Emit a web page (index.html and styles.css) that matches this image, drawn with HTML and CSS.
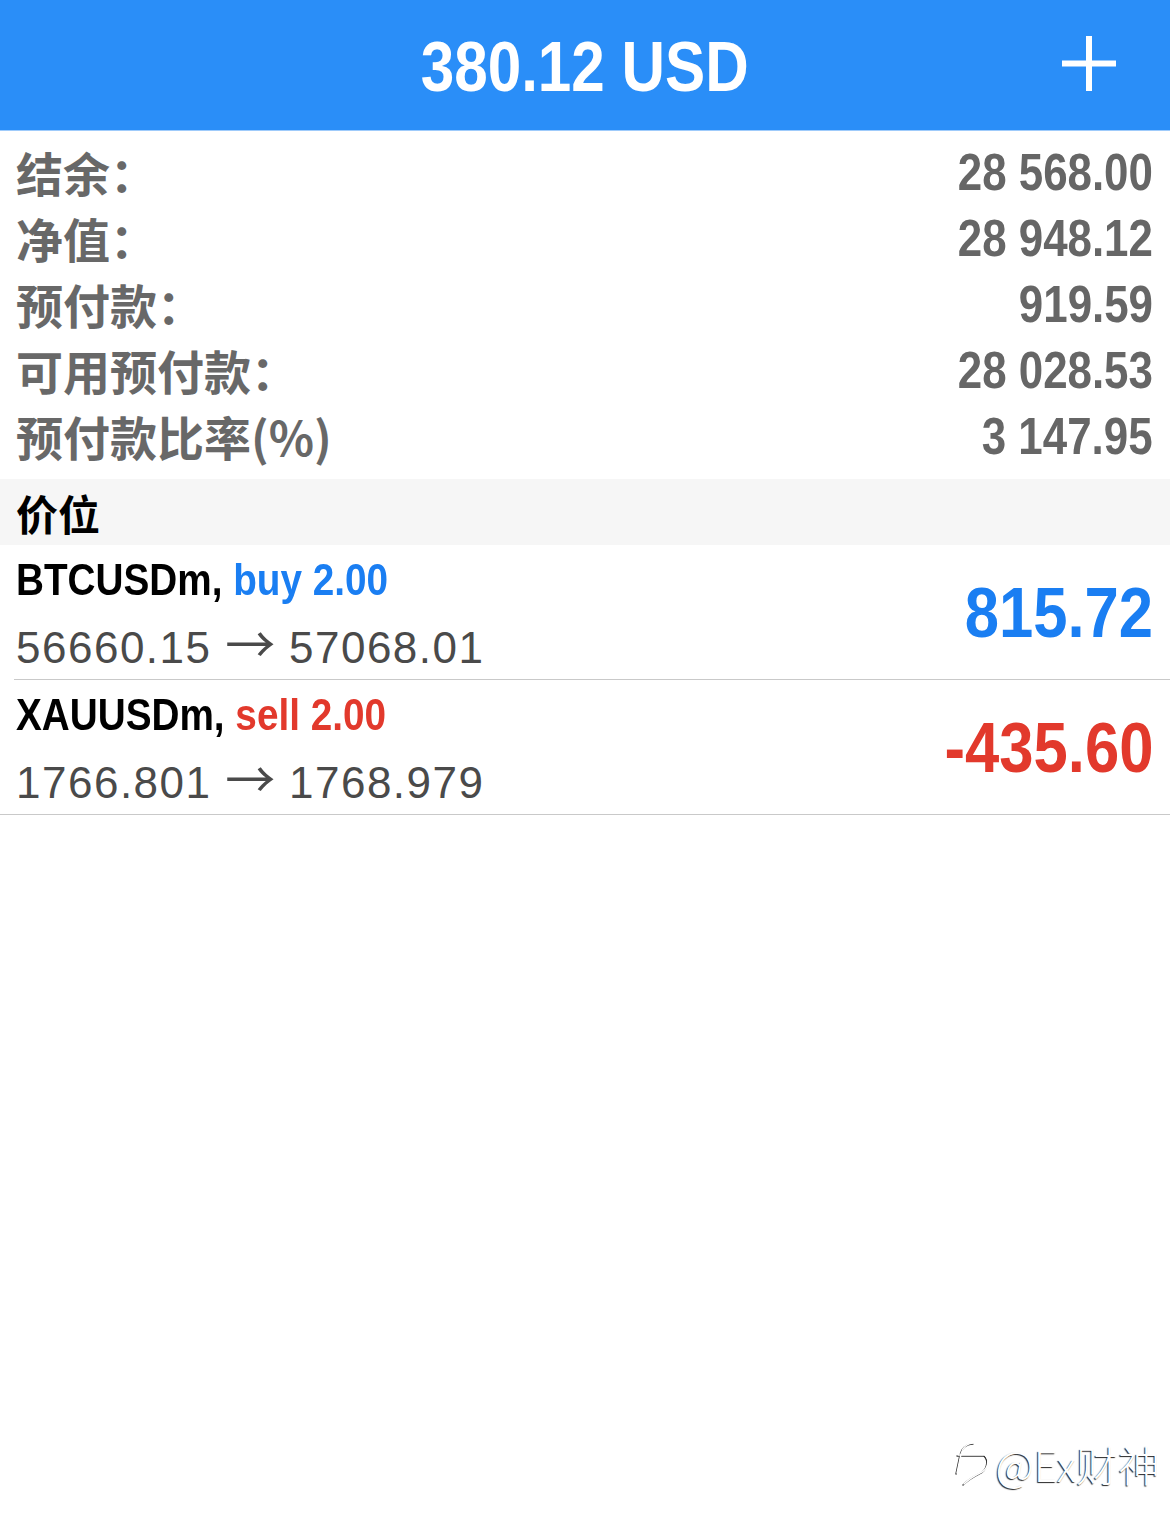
FILE: index.html
```html
<!DOCTYPE html>
<html lang="zh-CN">
<head>
<meta charset="utf-8">
<title>MT4 交易</title>
<link rel="stylesheet" href="styles.css">
</head>
<body>
<div class="screen">
  <header class="topbar">
    <div class="spacer"></div>
    <div class="title"><span class="cond c-center">380.12 USD</span></div>
    <div class="actions">
      <svg class="plus" viewBox="0 0 54 55" width="54" height="55" aria-hidden="true">
        <rect x="24" y="0" width="6" height="55" fill="#fff"/>
        <rect x="0" y="24.5" width="54" height="6" fill="#fff"/>
      </svg>
    </div>
  </header>

  <section class="summary">
    <div class="srow"><span class="label">结余：</span><span class="value cond c-right">28 568.00</span></div>
    <div class="srow"><span class="label">净值：</span><span class="value cond c-right">28 948.12</span></div>
    <div class="srow"><span class="label">预付款：</span><span class="value cond c-right">919.59</span></div>
    <div class="srow"><span class="label">可用预付款：</span><span class="value cond c-right">28 028.53</span></div>
    <div class="srow"><span class="label">预付款比率(%)</span><span class="value cond c-right">3 147.95</span></div>
  </section>

  <div class="section-title">价位</div>

  <div class="position inset">
    <div class="pinfo">
      <div class="pline1"><span class="cond c-left"><span class="sym">BTCUSDm,</span> <span class="buy">buy 2.00</span></span></div>
      <div class="pline2">56660.15 <span class="arrow">→</span> 57068.01</div>
    </div>
    <div class="pl pos"><span class="cond c-right">815.72</span></div>
  </div>
  <div class="position">
    <div class="pinfo">
      <div class="pline1"><span class="cond c-left"><span class="sym">XAUUSDm,</span> <span class="sell">sell 2.00</span></span></div>
      <div class="pline2">1766.801 <span class="arrow">→</span> 1768.979</div>
    </div>
    <div class="pl neg"><span class="cond c-right">-435.60</span></div>
  </div>

  <div class="watermark">
    <svg class="wb" viewBox="7 9 36 46" width="36" height="46" aria-hidden="true">
      <path d="M27 11 C20 11 15 16 14 22 L10 41" fill="none" stroke="#fff" stroke-width="1.4" stroke-linecap="round"/>
      <path d="M11 23 L38 23" fill="none" stroke="#fff" stroke-width="1.4" stroke-linecap="round"/>
      <path d="M38 23 C43 28 41 38 33 41 C27 44 22 47 17 52" fill="none" stroke="#fff" stroke-width="1.4" stroke-linecap="round"/>
    </svg>
    <span class="wtext">@Ex财神</span>
  </div>
</div>
</body>
</html>
```

FILE: styles.css
```css
html, body {
  margin: 0;
  padding: 0;
  background: #ffffff;
}

.screen {
  position: relative;
  width: 1170px;
  height: 1527px;
  overflow: hidden;
  background: #fff;
}

/* condensed bold look: Liberation Sans Bold squeezed horizontally */
.cond {
  display: inline-block;
  font-family: "Liberation Sans", Arial, sans-serif;
  font-weight: 700;
  white-space: nowrap;
  transform: scaleX(0.86);
}
.c-center { transform-origin: center center; }
.c-right { transform-origin: right center; }
.c-left { transform-origin: left center; }

.topbar {
  display: grid;
  grid-template-columns: 1fr auto 1fr;
  align-items: center;
  height: 130px;
  background: #2a8ef8;
  border-bottom: 1px solid #9fcbfb;
}

.title {
  font-size: 70px;
  line-height: 1;
  color: #ffffff;
  padding-top: 4px;
}

.actions {
  display: flex;
  justify-content: flex-end;
  padding-right: 54px;
}

.plus {
  display: block;
  margin-top: -4px;
}

.summary {
  padding: 7px 17px 11px 16px;
}

.srow {
  display: flex;
  justify-content: space-between;
  align-items: center;
  height: 66px;
}

.label {
  font-family: "Noto Sans CJK SC", "Liberation Sans", sans-serif;
  font-weight: 700;
  font-size: 47px;
  color: #686868;
  line-height: 1;
}

.value {
  font-size: 51px;
  color: #666666;
  line-height: 1;
  padding-top: 2px;
}

.section-title {
  display: flex;
  align-items: center;
  height: 66px;
  padding-left: 16px;
  background: #f6f6f6;
  font-family: "Noto Sans CJK SC", "Liberation Sans", sans-serif;
  font-weight: 700;
  font-size: 42px;
  color: #000000;
}

.position {
  display: flex;
  justify-content: space-between;
  align-items: center;
  height: 124px;
  padding: 4px 17px 6px 16px;
  border-bottom: 1px solid #c9c9c9;
}

.position.inset {
  margin-left: 14px;
  padding-left: 2px;
}

.pline1 {
  font-size: 45px;
  line-height: 62px;
  height: 62px;
  color: #000000;
}

.buy { color: #1a7ef2; }
.sell { color: #e2392c; }

.pline2 {
  font-family: "Liberation Sans", Arial, sans-serif;
  font-weight: 400;
  font-size: 44px;
  letter-spacing: 1.5px;
  line-height: 60px;
  height: 62px;
  color: #4a4a4a;
  white-space: nowrap;
}

.arrow {
  font-family: "Noto Sans CJK SC", sans-serif;
  font-weight: 400;
  font-size: 50px;
  letter-spacing: 0;
}

.pl {
  font-size: 70px;
  line-height: 1;
  padding-top: 4px;
}

.pl .cond { transform: scaleX(0.88); }

.pl.pos { color: #1a7ef2; }
.pl.neg { color: #e2392c; }

.watermark {
  position: absolute;
  right: 10px;
  bottom: 40px;
  display: flex;
  align-items: center;
  gap: 6px;
}

.wb {
  display: block;
  filter: drop-shadow(-1px 1px 0.6px rgba(0,0,0,0.8));
}

.wtext {
  font-family: "Noto Sans CJK SC", "Liberation Sans", sans-serif;
  font-weight: 300;
  font-size: 42px;
  line-height: 1;
  color: #ffffff;
  text-shadow: -1px 1px 1px rgba(0,0,0,0.85);
}
```
